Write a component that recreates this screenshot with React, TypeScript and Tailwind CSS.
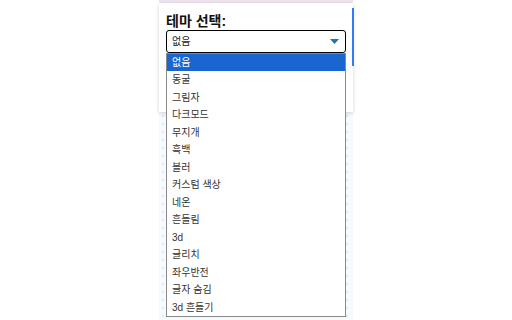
import React from "react";

const items = [
  "없음",
  "동굴",
  "그림자",
  "다크모드",
  "무지개",
  "흑백",
  "블러",
  "커스텀 색상",
  "네온",
  "흔들림",
  "3d",
  "글리치",
  "좌우반전",
  "글자 숨김",
  "3d 흔들기",
];

export default function App() {
  return (
    <div
      className="w-[512px] h-[320px] bg-white flex justify-center overflow-hidden"
      style={{ fontFamily: '"Liberation Sans", "Noto Sans CJK KR", sans-serif' }}
    >
      <div className="w-[194px] h-full flex flex-col bg-[#f6faff] bg-[radial-gradient(#dbe8f5_1px,transparent_1px)] bg-[size:8px_8px]">
        <div className="h-[3px] bg-[#efe5ef]" />
        <div className="relative">
          <div className="h-[109px] bg-white shadow-[0_1px_4px_rgba(0,0,0,0.18)] pl-[7px] pr-[7px] pt-[9px] relative">
            <div className="absolute right-[-1px] top-[5px] w-[2px] h-[58px] bg-[#2f7cf6]" />
            <div className="text-[14px] font-bold text-[#111] leading-[18px]">테마 선택:</div>
            <div className="h-[23px] w-[180px] border-[1.5px] border-black rounded-[3px] flex items-center justify-between px-[5px]">
              <span className="text-[10px] text-[#222]">없음</span>
              <svg width="9" height="5" viewBox="0 0 9 5" className="mr-[1px]">
                <polygon points="0,0 9,0 4.5,5" fill="#1a73c8" />
              </svg>
            </div>
          </div>
          <div className="absolute left-[7px] top-[49.5px] w-[180px] border border-[#8a8a8a] bg-white">
            {items.map((it, i) => (
              <div
                key={it}
                className={
                  i === 0
                    ? "h-[17.5px] flex items-center pl-[5px] text-[10px] bg-[#1a66d0] text-white"
                    : "h-[17.5px] flex items-center pl-[5px] text-[10px] text-[#333]"
                }
              >
                {it}
              </div>
            ))}
          </div>
        </div>
      </div>
    </div>
  );
}
